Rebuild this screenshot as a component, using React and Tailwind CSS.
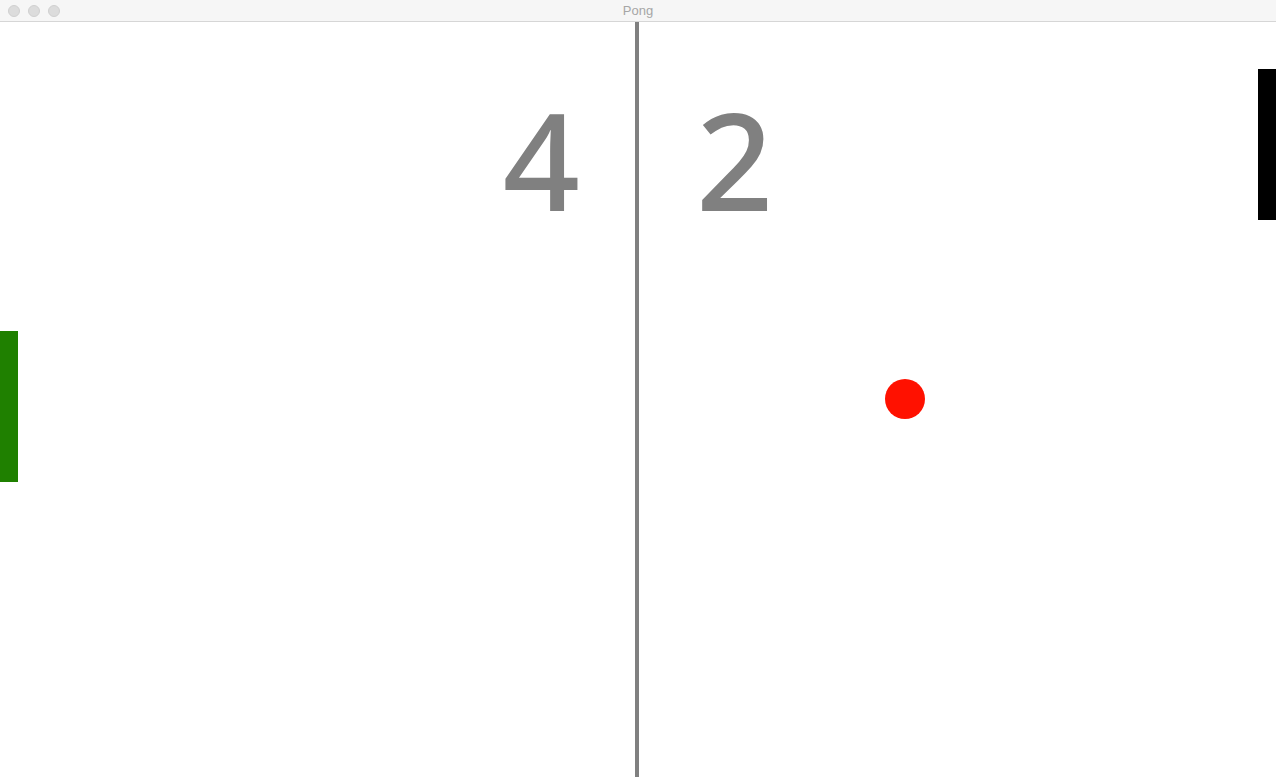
export default function App() {
  return (
    <div className="w-[1276px] h-[777px] flex flex-col bg-white overflow-hidden font-['Open_Sans',sans-serif]">
      {/* Title bar */}
      <div className="relative h-[22px] shrink-0 bg-[#f6f6f6] border-b border-[#d6d6d6] flex items-center justify-center">
        <div className="absolute left-[8px] top-[5px] flex gap-[8px]">
          <span className="w-[12px] h-[12px] rounded-full bg-[#dcdcdc] border border-[#d0d0d0]" />
          <span className="w-[12px] h-[12px] rounded-full bg-[#dcdcdc] border border-[#d0d0d0]" />
          <span className="w-[12px] h-[12px] rounded-full bg-[#dcdcdc] border border-[#d0d0d0]" />
        </div>
        <span className="text-[13px] leading-none text-[#a6a6a6] font-['Liberation_Sans',sans-serif]">Pong</span>
      </div>

      {/* Court */}
      <div className="relative flex-1 flex font-['Noto_Sans','Open_Sans',sans-serif]">
        <div className="w-[635px] flex justify-end pr-[55px] pt-[70px]">
          <span className="text-[135px] leading-none font-medium text-[#808080]">4</span>
        </div>
        <div className="w-[4px] bg-[#808080]" />
        <div className="flex-1 flex pl-[57px] pt-[70px]">
          <span className="text-[135px] leading-none font-medium text-[#808080]">2</span>
        </div>

        {/* Paddles and ball */}
        <div className="absolute left-0 top-[309px] w-[18px] h-[151px] bg-[#1f8000]" />
        <div className="absolute right-0 top-[47px] w-[18px] h-[151px] bg-black" />
        <div className="absolute left-[885px] top-[357px] w-[40px] h-[40px] rounded-full bg-[#ff1100]" />
      </div>
    </div>
  );
}
